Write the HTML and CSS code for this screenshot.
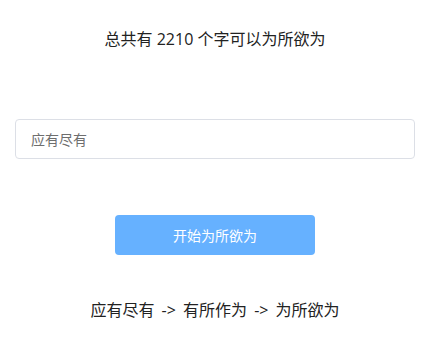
FILE: index.html
```html
<!DOCTYPE html>
<html lang="zh-CN">
<head>
  <meta charset="UTF-8">
  <meta name="viewport" content="width=device-width, initial-scale=1.0">
  <title>为所欲为</title>
  <link rel="stylesheet" href="styles.css">
</head>
<body>
  <div id="app">
    <div class="total">总共有 2210 个字可以为所欲为</div>
    <input class="word-input" type="text" placeholder="应有尽有">
    <button class="start-btn">开始为所欲为</button>
    <div class="chain">应有尽有 -&gt; 有所作为 -&gt; 为所欲为</div>
  </div>
</body>
</html>
```

FILE: styles.css
```css
body {
  margin: 0;
  font-family: "Open Sans", "Noto Sans CJK SC", sans-serif;
  color: #222;
  background: #fff;
}

#app {
  display: flex;
  flex-direction: column;
  align-items: center;
  padding-top: 27px;
}

.total {
  font-size: 16px;
  line-height: 24px;
}

.word-input {
  box-sizing: border-box;
  width: 400px;
  height: 40px;
  margin-top: 68px;
  padding: 0 15px;
  border: 1px solid #dcdfe6;
  border-radius: 4px;
  font-family: inherit;
  font-size: 14px;
  color: #606266;
  outline: none;
}

.word-input::placeholder {
  color: #6e6e6e;
}

.start-btn {
  width: 200px;
  height: 40px;
  margin-top: 56px;
  border: none;
  border-radius: 4px;
  background-color: #66b1ff;
  color: #fff;
  font-family: inherit;
  font-size: 14px;
  cursor: pointer;
}

.chain {
  margin-top: 43px;
  font-size: 16px;
  line-height: 24px;
  word-spacing: 3px;
}
```
